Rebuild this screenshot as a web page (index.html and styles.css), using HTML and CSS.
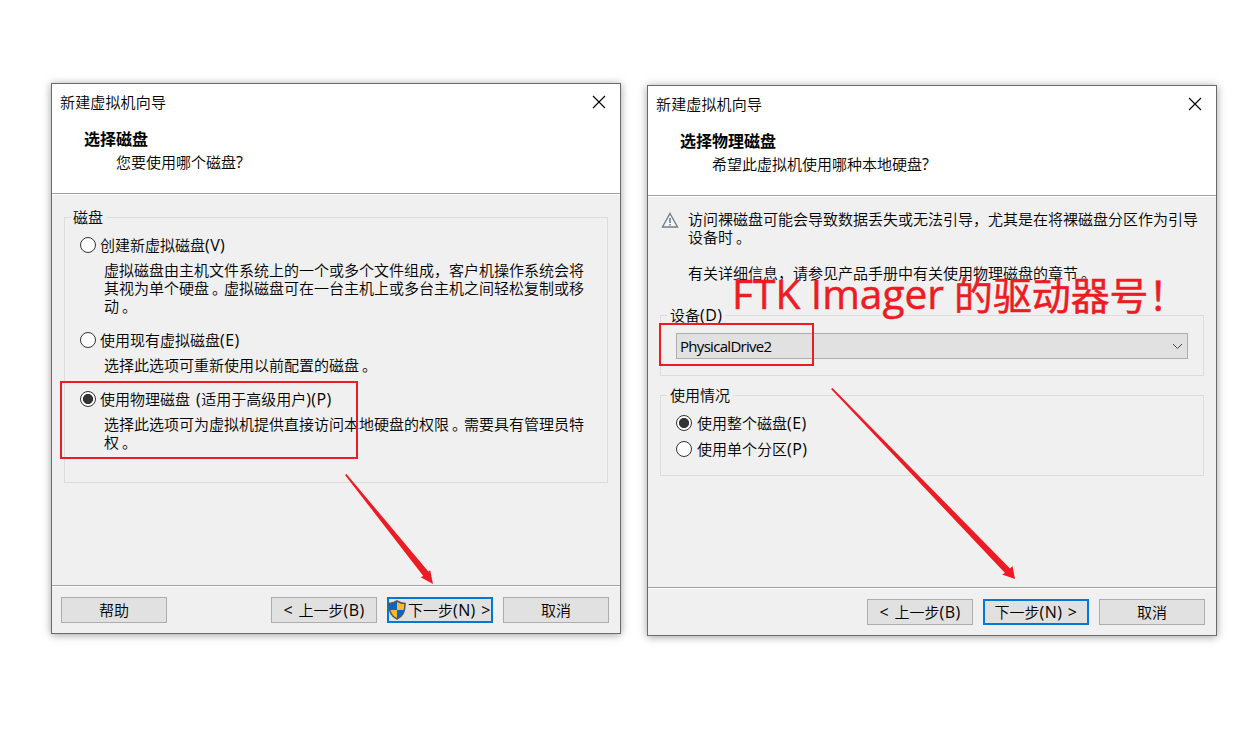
FILE: index.html
```html
<!DOCTYPE html>
<html lang="zh-CN">
<head>
<meta charset="utf-8">
<title>新建虚拟机向导</title>
<link rel="stylesheet" href="styles.css">
</head>
<body>
<main class="stage">
  <section class="dialog">
    <header class="head">
      <div class="titlebar"><span>新建虚拟机向导</span>
        <svg class="close" width="14" height="14" viewBox="0 0 14 14"><path d="M1 1L13 13M13 1L1 13"/></svg>
      </div>
      <h1>选择磁盘</h1>
      <p class="sub">您要使用哪个磁盘<span class="lat">?</span></p>
    </header>
    <div class="content">
      <div class="group disks">
        <div class="legend">磁盘</div>
        <label class="radio first"><i class="dot"></i>创建新虚拟磁盘<span class="lat">(V)</span></label>
        <p class="desc">虚拟磁盘由主机文件系统上的一个或多个文件组成，客户机操作系统会将<br>其视为单个硬盘<span class="stop">。</span>虚拟磁盘可在一台主机上或多台主机之间轻松复制或移<br>动<span class="stop">。</span></p>
        <label class="radio"><i class="dot"></i>使用现有虚拟磁盘<span class="lat">(E)</span></label>
        <p class="desc">选择此选项可重新使用以前配置的磁盘<span class="stop">。</span></p>
        <label class="radio"><i class="dot on"></i>使用物理磁盘 <span class="lat gap">(</span>适用于高级用户<span class="lat">)(P)</span></label>
        <p class="desc">选择此选项可为虚拟机提供直接访问本地硬盘的权限<span class="stop">。</span>需要具有管理员特<br>权<span class="stop">。</span></p>
      </div>
    </div>
    <footer class="foot">
      <button class="btn help">帮助</button>
      <button class="btn"><span class="lat">&lt; </span>上一步<span class="lat">(B)</span></button>
      <button class="btn primary shielded">
        <svg class="shield" width="18" height="20" viewBox="0 0 18 20">
          <defs><clipPath id="sh"><path d="M9 1C6.500 2.600 3.800 3.400 1 3.500C.8 10.500 2.300 16 9 19C15.700 16 17.200 10.500 17 3.500C14.200 3.400 11.500 2.600 9 1Z"/></clipPath></defs>
          <g clip-path="url(#sh)"><path fill="#fdb92c" d="M9 0H18V10H9ZM0 10H9V20H0Z"/><path fill="#0a64c8" d="M0 0H9V10H0ZM9 10H18V20H9Z"/></g>
          <path fill="none" stroke="#505860" stroke-width="1.500" d="M9 1C6.500 2.600 3.800 3.400 1 3.500C.8 10.500 2.300 16 9 19C15.700 16 17.200 10.500 17 3.500C14.200 3.400 11.500 2.600 9 1Z"/>
        </svg>下一步<span class="lat">(N) &gt;</span></button>
      <button class="btn">取消</button>
    </footer>
  </section>

  <section class="dialog second">
    <header class="head">
      <div class="titlebar"><span>新建虚拟机向导</span>
        <svg class="close" width="14" height="14" viewBox="0 0 14 14"><path d="M1 1L13 13M13 1L1 13"/></svg>
      </div>
      <h1>选择物理磁盘</h1>
      <p class="sub">希望此虚拟机使用哪种本地硬盘<span class="lat">?</span></p>
    </header>
    <div class="content">
      <div class="notice">
        <svg class="warn" width="18" height="16" viewBox="0 0 18 16"><path d="M9 1.500L16.500 15H1.500Z" fill="#f4f6f8" stroke="#6f808c" stroke-width="1.400"/><path d="M9 6V11M9 12V13.600" stroke="#6f808c" stroke-width="1.600"/></svg>
        <p>访问裸磁盘可能会导致数据丢失或无法引导，尤其是在将裸磁盘分区作为引导<br>设备时<span class="stop">。</span><br><br>有关详细信息，请参见产品手册中有关使用物理磁盘的章节<span class="stop">。</span></p>
      </div>
      <div class="group device">
        <div class="legend">设备<span class="lat">(D)</span></div>
        <div class="select"><span class="value">PhysicalDrive2</span>
          <svg width="11" height="7" viewBox="0 0 11 7"><path d="M1 1L5.500 5.500L10 1" fill="none" stroke="#444"/></svg>
        </div>
      </div>
      <div class="group usage">
        <div class="legend">使用情况</div>
        <label class="radio first"><i class="dot on"></i>使用整个磁盘<span class="lat">(E)</span></label>
        <label class="radio next"><i class="dot"></i>使用单个分区<span class="lat">(P)</span></label>
      </div>
    </div>
    <footer class="foot">
      <button class="btn"><span class="lat">&lt; </span>上一步<span class="lat">(B)</span></button>
      <button class="btn primary">下一步<span class="lat">(N) &gt;</span></button>
      <button class="btn">取消</button>
    </footer>
  </section>

  <svg class="marks" width="1256" height="750" viewBox="0 0 1256 750">
    <g fill="none" stroke="#ed1c24" stroke-width="2">
      <rect x="61" y="382" width="296" height="76"/>
      <rect x="660" y="324" width="153" height="41"/>
    </g>
    <g fill="#ed1c24">
      <path d="M345 475L346.500 474L428.300 571.500L430.200 570.300L433 584L420.700 577.200L423.300 576Z"/>
      <path d="M831 389L832.500 388L1010 568.500L1012.500 566L1015 579L1002 574.500L1005 573Z"/>
      <g stroke="#ed1c24" stroke-width=".5">
        <text x="732" y="309" font-size="41" textLength="212" lengthAdjust="spacingAndGlyphs">FTK Imager</text>
        <text class="cjk" x="954" y="310" font-size="38.900">的驱动器号！</text>
      </g>
    </g>
  </svg>
</main>
</body>
</html>
```
FILE: styles.css
```css
* { box-sizing: border-box; }
body { margin: 0; background: #fff; color: #000; font: 350 15px/18px "Open Sans", "Noto Sans CJK SC", sans-serif; }
h1, p { margin: 0; }
.stage { position: relative; display: flex; align-items: flex-start; width: 1256px; height: 750px; padding: 83px 0 0 51px; overflow: hidden; white-space: nowrap; }
.dialog { display: flex; flex-direction: column; width: 570px; height: 551px; border: 1px solid #6b6b6b; background: #f0f0f0; box-shadow: 0 1px 8px rgba(0,0,0,.38); }
.second { margin: 2px 0 0 26px; }
.head { height: 111px; padding: 9px 14px 0 8px; background: #fff; border-bottom: 1px solid #fff; box-shadow: inset 0 -1px #a0a0a0; }
.titlebar { display: flex; justify-content: space-between; align-items: center; height: 18px; letter-spacing: .15px; }
.close { stroke: #000; stroke-width: 1.1; fill: none; }
h1 { margin: 19px 0 0 24px; font-size: 16px; line-height: 18px; font-weight: 700; }
.sub { margin: 5px 0 0 56px; }
.lat { font-size: 16px; font-weight: 400; line-height: 16px; white-space: pre; letter-spacing: .4px; }
.stop { display: inline-block; width: 15px; height: 18px; padding-left: 3px; vertical-align: top; }
.content { flex: 1; padding: 22px 12px 0; }
.group { border: 1px solid #dcdcdc; }
.disks { height: 266px; }
.legend { width: fit-content; height: 18px; margin: -10px 0 0 6px; padding: 0 4px 0 2px; background: #f0f0f0; }
.second .legend { padding: 0 3px; }
.radio { display: flex; align-items: center; height: 18px; margin: 16px 0 0 15px; }
.radio.first { margin-top: 10px; }
.radio.next { margin-top: 8px; }
.dot { width: 16px; height: 16px; margin-right: 4px; border: 1px solid #333; border-radius: 50%; background: #fff; }
.second .dot { margin-right: 5px; }
.dot.on { background: radial-gradient(circle, #333 0 4.7px, #fff 5.4px); }
.gap { margin-left: 6px; }
.desc { margin: 7px 0 0 39px; }
.foot { display: flex; justify-content: flex-end; gap: 10px; height: 48px; padding: 11px 11px 0 9px; border-top: 1px solid #a0a0a0; box-shadow: inset 0 1px #fff; }
.help { margin-right: auto; }
.btn { display: flex; align-items: center; justify-content: center; width: 106px; height: 26px; padding: 0; border: 1px solid #adadad; background: #e1e1e1; color: #000; font: inherit; white-space: pre; word-spacing: 1px; }
.primary { border: 2px solid #0078d7; }
.shielded { justify-content: flex-start; }
.shield { flex: none; margin-left: -1px; margin-right: 2px; }
.notice { display: flex; height: 98px; margin-top: -7px; }
.warn { margin: 2px 9px 0 1px; flex: none; }
.second .content { padding-top: 20px; }
.device { height: 61px; margin-top: 7px; }
.select { display: flex; align-items: center; justify-content: space-between; width: 512px; height: 26px; margin: 9px 0 0 15px; padding: 0 4px 0 3px; border: 1px solid #adadad; background: #e1e1e1; }
.value { font-size: 15px; font-weight: 400; letter-spacing: -.7px; }
.usage { height: 81px; margin-top: 19px; }
.marks { position: absolute; left: 0; top: 0; font-family: "Open Sans", sans-serif; font-weight: 400; }
.cjk { font-family: "Noto Sans CJK SC", sans-serif; }
```
